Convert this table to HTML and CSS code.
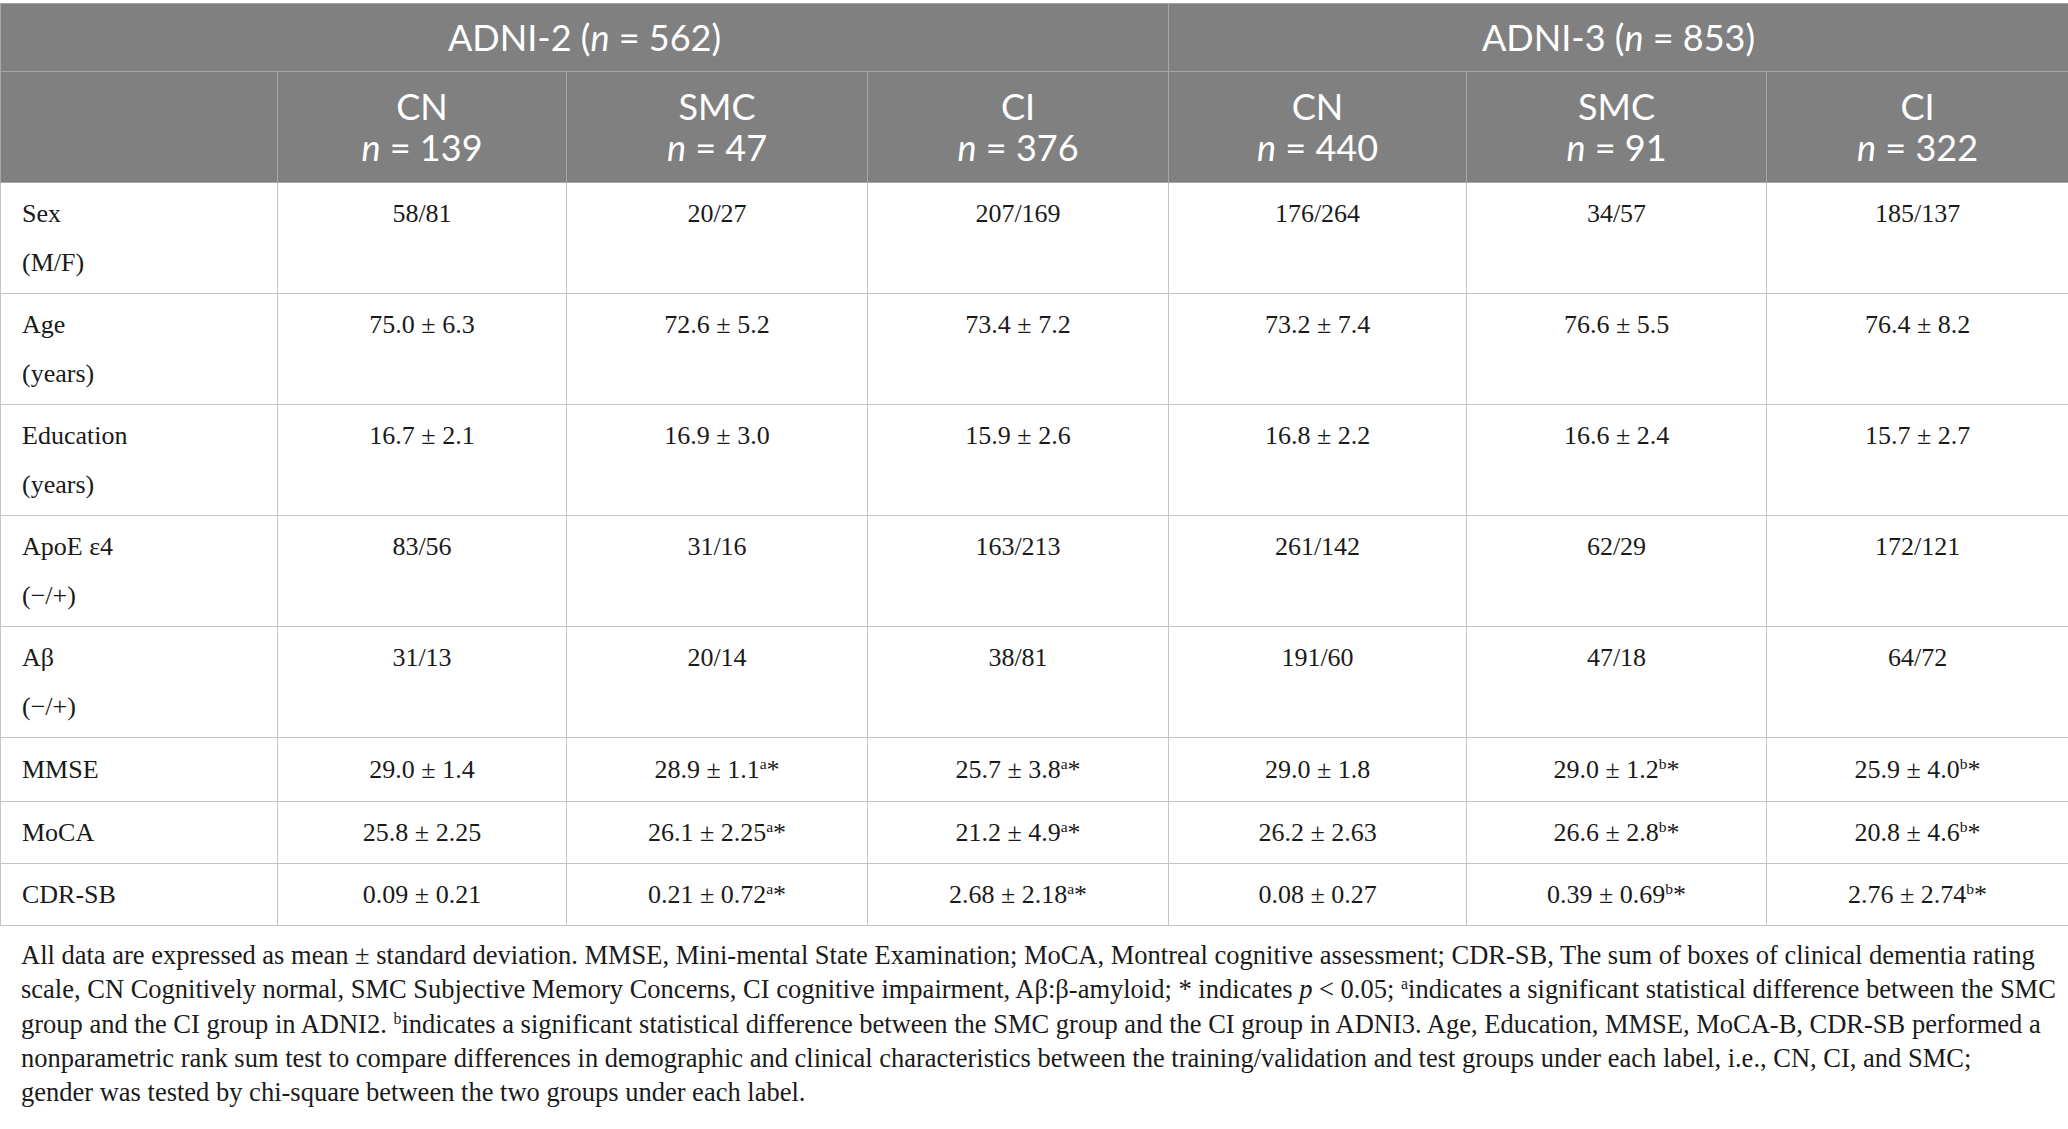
FILE: index.html
```html
<!DOCTYPE html>
<html lang="en">
<head>
<meta charset="UTF-8" />
<meta name="viewport" content="width=device-width, initial-scale=1" />
<title>Demographic and clinical characteristics</title>
<link rel="stylesheet" href="styles.css">
</head>
<body>
  <div class="table-wrap">
    <table class="data-table">
      <colgroup>
        <col style="width:277px">
        <col style="width:289px">
        <col style="width:301px">
        <col style="width:301px">
        <col style="width:298px">
        <col style="width:300px">
        <col style="width:302px">
      </colgroup>
      <thead>
        <tr class="head-top">
          <th colspan="4">ADNI-2 (<i>n</i> = 562)</th>
          <th colspan="3">ADNI-3 (<i>n</i> = 853)</th>
        </tr>
        <tr class="head-groups">
          <th></th>
          <th>CN<br><i>n</i> = 139</th>
          <th>SMC<br><i>n</i> = 47</th>
          <th>CI<br><i>n</i> = 376</th>
          <th>CN<br><i>n</i> = 440</th>
          <th>SMC<br><i>n</i> = 91</th>
          <th>CI<br><i>n</i> = 322</th>
        </tr>
      </thead>
      <tbody>
        <tr>
          <td class="label">Sex<br>(M/F)</td>
          <td>58/81</td>
          <td>20/27</td>
          <td>207/169</td>
          <td>176/264</td>
          <td>34/57</td>
          <td>185/137</td>
        </tr>
        <tr>
          <td class="label">Age<br>(years)</td>
          <td>75.0 ± 6.3</td>
          <td>72.6 ± 5.2</td>
          <td>73.4 ± 7.2</td>
          <td>73.2 ± 7.4</td>
          <td>76.6 ± 5.5</td>
          <td>76.4 ± 8.2</td>
        </tr>
        <tr>
          <td class="label">Education<br>(years)</td>
          <td>16.7 ± 2.1</td>
          <td>16.9 ± 3.0</td>
          <td>15.9 ± 2.6</td>
          <td>16.8 ± 2.2</td>
          <td>16.6 ± 2.4</td>
          <td>15.7 ± 2.7</td>
        </tr>
        <tr>
          <td class="label">ApoE ε4<br>(−/+)</td>
          <td>83/56</td>
          <td>31/16</td>
          <td>163/213</td>
          <td>261/142</td>
          <td>62/29</td>
          <td>172/121</td>
        </tr>
        <tr>
          <td class="label">Aβ<br>(−/+)</td>
          <td>31/13</td>
          <td>20/14</td>
          <td>38/81</td>
          <td>191/60</td>
          <td>47/18</td>
          <td>64/72</td>
        </tr>
        <tr class="first-single">
          <td class="label">MMSE</td>
          <td>29.0 ± 1.4</td>
          <td>28.9 ± 1.1<sup>a</sup>*</td>
          <td>25.7 ± 3.8<sup>a</sup>*</td>
          <td>29.0 ± 1.8</td>
          <td>29.0 ± 1.2<sup>b</sup>*</td>
          <td>25.9 ± 4.0<sup>b</sup>*</td>
        </tr>
        <tr>
          <td class="label">MoCA</td>
          <td>25.8 ± 2.25</td>
          <td>26.1 ± 2.25<sup>a</sup>*</td>
          <td>21.2 ± 4.9<sup>a</sup>*</td>
          <td>26.2 ± 2.63</td>
          <td>26.6 ± 2.8<sup>b</sup>*</td>
          <td>20.8 ± 4.6<sup>b</sup>*</td>
        </tr>
        <tr>
          <td class="label">CDR-SB</td>
          <td>0.09 ± 0.21</td>
          <td>0.21 ± 0.72<sup>a</sup>*</td>
          <td>2.68 ± 2.18<sup>a</sup>*</td>
          <td>0.08 ± 0.27</td>
          <td>0.39 ± 0.69<sup>b</sup>*</td>
          <td>2.76 ± 2.74<sup>b</sup>*</td>
        </tr>
      </tbody>
    </table>

    <p class="table-note">All data are expressed as mean ± standard deviation. MMSE, Mini-mental State Examination; MoCA, Montreal cognitive assessment; CDR-SB, The sum of boxes of clinical dementia rating scale, CN Cognitively normal, SMC Subjective Memory Concerns, CI cognitive impairment, Aβ:β-amyloid; * indicates <i>p</i> &lt; 0.05; <sup>a</sup>indicates a significant statistical difference between the SMC group and the CI group in ADNI2. <sup>b</sup>indicates a significant statistical difference between the SMC group and the CI group in ADNI3. Age, Education, MMSE, MoCA-B, CDR-SB performed a nonparametric rank sum test to compare differences in demographic and clinical characteristics between the training/validation and test groups under each label, i.e., CN, CI, and SMC; gender&nbsp;was tested by chi-square between the two groups under each label.</p>
  </div>
</body>
</html>
```

FILE: styles.css
```css
body {
  font-family: 'Liberation Serif', 'Times New Roman', serif;
  background: #ffffff;
  margin: 0;
  padding: 3px 0 0 0;
  color: #1a1a1a;
}
.table-wrap {
  width: 2068px;
}
.data-table {
  width: 2068px;
  table-layout: fixed;
  border-collapse: collapse;
  border: 1px solid #c4c4c4;
}
.data-table th {
  font-family: Lato, 'Open Sans', sans-serif;
  font-weight: 400;
  font-size: 36px;
  line-height: 41px;
  color: #ffffff;
  background: #808080;
  border: 1px solid #a6a6a6;
  text-align: center;
}
.head-top th {
  padding: 13px 10px;
}
.head-groups th {
  padding: 14px 10px;
}
.data-table td {
  font-size: 26px;
  line-height: 49px;
  padding: 6px 10px;
  border: 1px solid #c4c4c4;
  text-align: center;
  vertical-align: top;
}
.data-table .first-single td {
  padding: 7px 10px;
}
.data-table td.label {
  text-align: left;
  padding-left: 21px;
}
sup {
  font-size: 0.6em;
  line-height: 0;
  vertical-align: 0.55em;
}
.table-note {
  margin: 12px 0 0 0;
  padding: 0 10px 0 21px;
  font-size: 26.5px;
  line-height: 34.3px;
}
```
